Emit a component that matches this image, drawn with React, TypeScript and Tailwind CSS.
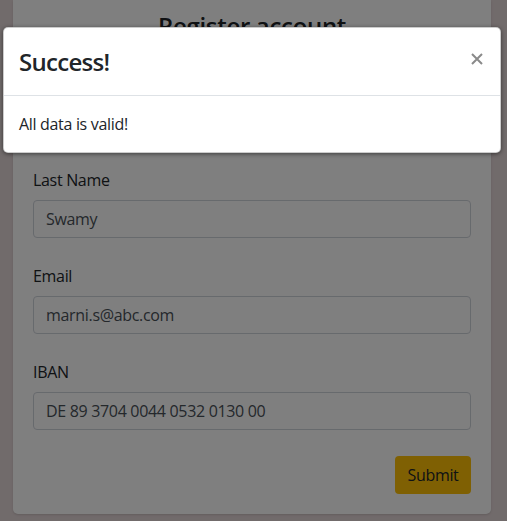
import React from "react";

const font = { fontFamily: '"Open Sans", "Noto Sans", sans-serif' };

function Field({ label, value }: { label: string; value: string }) {
  return (
    <div className="flex flex-col">
      <label className="text-[16px] leading-6 text-[#212529] mb-2">{label}</label>
      <input
        readOnly
        value={value}
        className="h-[38px] w-full rounded-[4px] border border-[#ced4da] bg-white px-3 text-[16px] text-[#495057] outline-none"
      />
    </div>
  );
}

export default function App() {
  return (
    <div className="relative min-h-[521px] w-[507px] overflow-hidden bg-[#e3d6d7] tracking-[-0.02em]" style={font}>
      <div className="ml-[13px] mr-[16px] rounded-b-[5px] bg-white px-5 pt-2 pb-5 shadow-sm">
        <h2 className="text-center text-[24px] leading-9 font-semibold text-[#212529]">Register account</h2>
        <div className="mt-[28px] flex flex-col gap-[26px]">
          <Field label="First Name" value="Marni" />
          <Field label="Last Name" value="Swamy" />
          <Field label="Email" value="marni.s@abc.com" />
          <Field label="IBAN" value="DE 89 3704 0044 0532 0130 00" />
          <div className="flex justify-end">
            <button className="h-[38px] w-[76px] rounded-[4px] bg-[#ffc107] text-[16px] text-[#212529]">Submit</button>
          </div>
        </div>
      </div>

      <div className="absolute inset-0 bg-black/50" />

      <div className="absolute left-[3px] top-[27px] w-[498px] rounded-[5px] border border-black/20 bg-white shadow-[0_1px_4px_rgba(0,0,0,0.5)]">
        <div className="flex items-start justify-between border-b border-[#dee2e6] pl-[15px] pr-4 pt-4 pb-[15px]">
          <h5 className="text-[24px] leading-9 font-semibold tracking-[-0.03em] text-[#212529]">Success!</h5>
          <button className="mt-[5px] mr-[-3px] p-1 text-[#8a8a8a]">
            <svg width="12" height="12" viewBox="0 0 12 12">
              <path d="M1 1 L11 11 M11 1 L1 11" stroke="currentColor" strokeWidth="2" />
            </svg>
          </button>
        </div>
        <div className="px-[15px] py-4 text-[16px] leading-6 text-[#212529]">All data is valid!</div>
      </div>
    </div>
  );
}
